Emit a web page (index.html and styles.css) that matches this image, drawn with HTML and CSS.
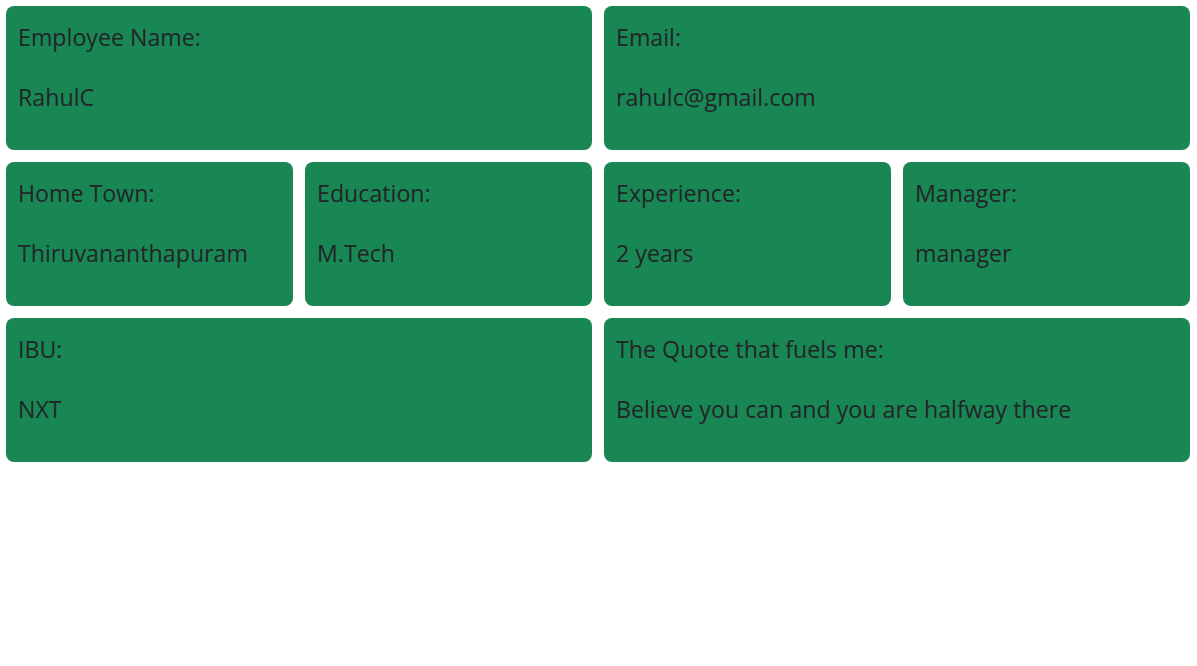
FILE: index.html
```html
<!DOCTYPE html>
<html lang="en">
<head>
<meta charset="utf-8">
<title>Employee Details</title>
<link rel="stylesheet" href="styles.css">
</head>
<body>
<main class="grid">
  <section class="card span-2"><p class="label">Employee Name:</p><p class="value">RahulC</p></section>
  <section class="card span-2"><p class="label">Email:</p><p class="value">rahulc@gmail.com</p></section>
  <section class="card"><p class="label">Home Town:</p><p class="value">Thiruvananthapuram</p></section>
  <section class="card"><p class="label">Education:</p><p class="value">M.Tech</p></section>
  <section class="card"><p class="label">Experience:</p><p class="value">2 years</p></section>
  <section class="card"><p class="label">Manager:</p><p class="value">manager</p></section>
  <section class="card span-2"><p class="label">IBU:</p><p class="value">NXT</p></section>
  <section class="card span-2"><p class="label">The Quote that fuels me:</p><p class="value">Believe you can and you are halfway there</p></section>
</main>
</body>
</html>
```
FILE: styles.css
```css
html, body {
  margin: 0;
  padding: 0;
  background: #fff;
}
body {
  font-family: "Open Sans", "Noto Sans", sans-serif;
  color: #212529;
}
.grid {
  display: grid;
  grid-template-columns: repeat(4, 1fr);
  gap: 12px;
  padding: 6px 7px 6px 6px;
}
.card {
  background: #198754;
  border-radius: 8px;
  height: 144px;
  box-sizing: border-box;
  padding: 13px 12px 12px;
}
.span-2 {
  grid-column: span 2;
}
.label, .value {
  margin: 0;
  font-size: 23.2px;
  line-height: 36px;
  white-space: nowrap;
}
.label {
  margin-bottom: 24px;
}
```
